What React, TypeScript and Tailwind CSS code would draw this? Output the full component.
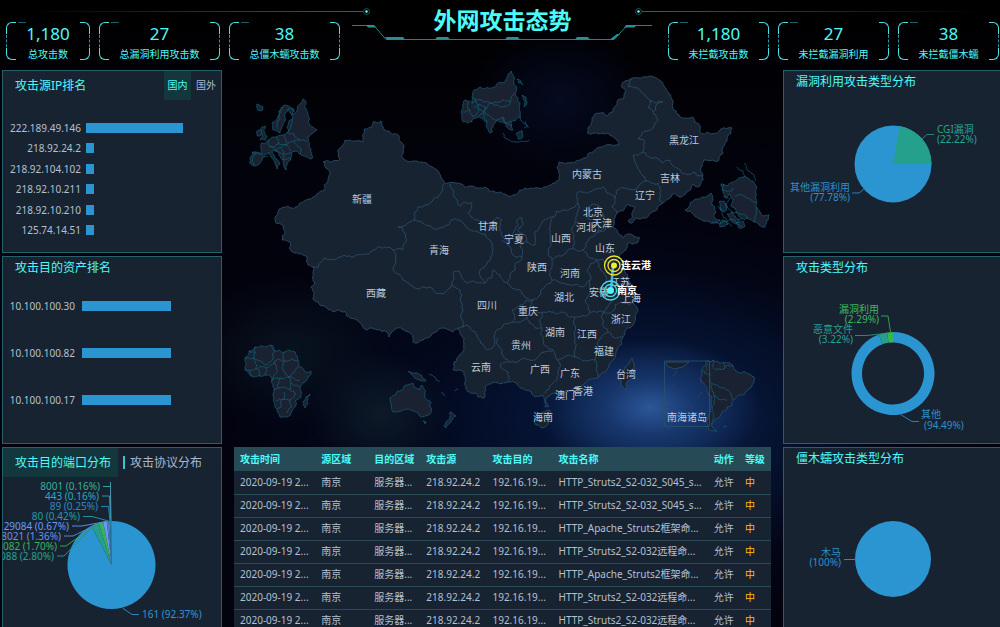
import type { ReactNode } from "react"

type Point = [number, number]

const totalStats = [
  { value: "1,180", label: "总攻击数", width: "min-w-[84px]" },
  { value: "27", label: "总漏洞利用攻击数", width: "min-w-[121px]" },
  { value: "38", label: "总僵木蠕攻击数", width: "min-w-[111px]" },
]

const missedStats = [
  { value: "1,180", label: "未拦截攻击数", width: "min-w-[101px]" },
  { value: "27", label: "未拦截漏洞利用", width: "min-w-[111px]" },
  { value: "38", label: "未拦截僵木蠕", width: "min-w-[101px]" },
]

const sourceIps = [
  { name: "222.189.49.146", percent: 72 },
  { name: "218.92.24.2", percent: 6 },
  { name: "218.92.104.102", percent: 6 },
  { name: "218.92.10.211", percent: 6 },
  { name: "218.92.10.210", percent: 6 },
  { name: "125.74.14.51", percent: 6 },
]

const targetAssets = [
  { name: "10.100.100.30", percent: 64 },
  { name: "10.100.100.82", percent: 64 },
  { name: "10.100.100.17", percent: 64 },
]

const attackNames = [
  "HTTP_Struts2_S2-032_S045_s...",
  "HTTP_Struts2_S2-032_S045_s...",
  "HTTP_Apache_Struts2框架命...",
  "HTTP_Struts2_S2-032远程命...",
  "HTTP_Apache_Struts2框架命...",
  "HTTP_Struts2_S2-032远程命...",
  "HTTP_Struts2_S2-032远程命...",
]

const columns = [
  { title: "攻击时间", width: "w-[81px]" },
  { title: "源区域", width: "w-[53px]" },
  { title: "目的区域", width: "w-[52px]" },
  { title: "攻击源", width: "w-[66px]" },
  { title: "攻击目的", width: "w-[66px]" },
  { title: "攻击名称", width: "w-[155px]" },
  { title: "动作", width: "w-[31px]" },
  { title: "等级", width: "w-[32px]" },
]

const provinces: [string, number, number][] = [
  ["新疆", 362, 199],
  ["西藏", 376, 293],
  ["青海", 439, 250],
  ["甘肃", 488, 226],
  ["宁夏", 514, 239],
  ["内蒙古", 587, 174],
  ["黑龙江", 684, 140],
  ["吉林", 670, 178],
  ["辽宁", 645, 195],
  ["北京", 593, 212],
  ["天津", 602, 223],
  ["河北", 586, 227],
  ["山西", 561, 238],
  ["山东", 605, 248],
  ["陕西", 537, 267],
  ["河南", 570, 273],
  ["江苏", 620, 282],
  ["安徽", 599, 292],
  ["上海", 631, 298],
  ["湖北", 564, 297],
  ["四川", 487, 305],
  ["重庆", 528, 311],
  ["浙江", 621, 319],
  ["湖南", 555, 332],
  ["江西", 587, 334],
  ["贵州", 521, 345],
  ["福建", 604, 351],
  ["云南", 481, 367],
  ["广西", 540, 369],
  ["广东", 570, 373],
  ["台湾", 626, 374],
  ["香港", 583, 391],
  ["澳门", 565, 395],
  ["海南", 543, 417],
  ["南海诸岛", 687, 417],
]

const mainland: Point[] = [
  [373, 122], [381, 121], [383, 127], [388, 131], [398, 135], [401, 142], [404, 147], [402, 157], [404, 159],
  [422, 162], [432, 167], [437, 170], [441, 177], [445, 184], [473, 186], [485, 187], [495, 192], [505, 194],
  [525, 188], [547, 187], [555, 183], [560, 175], [557, 168], [559, 162], [567, 163], [575, 163], [585, 158],
  [593, 152], [600, 147], [612, 145], [619, 145], [617, 140], [608, 133], [598, 134], [587, 133], [588, 128],
  [592, 120], [595, 114], [607, 116], [613, 112], [617, 102], [626, 92], [621, 86], [625, 81], [633, 78],
  [647, 77], [662, 82], [668, 92], [673, 102], [677, 114], [692, 117], [699, 124], [702, 134], [712, 134],
  [720, 130], [732, 128], [727, 138], [723, 153], [718, 161], [704, 160], [703, 175], [703, 180], [698, 187],
  [693, 184], [687, 192], [680, 197], [672, 194], [663, 203], [652, 212], [642, 218], [630, 223], [628, 221],
  [633, 212], [635, 207], [628, 204], [624, 210], [617, 213], [614, 219], [613, 227], [618, 233], [623, 238],
  [630, 234], [639, 237], [638, 242], [628, 243], [623, 252], [617, 260], [623, 268], [628, 277], [631, 287],
  [633, 293], [640, 297], [633, 303], [637, 308], [635, 317], [633, 325], [623, 337], [617, 350], [610, 363],
  [600, 375], [597, 378], [585, 383], [578, 387], [565, 392], [555, 393], [547, 397], [545, 402], [549, 407],
  [545, 407], [543, 395], [533, 395], [522, 388], [517, 383], [508, 382], [500, 384], [485, 387], [484, 398],
  [478, 397], [475, 393], [466, 388], [465, 378], [460, 370], [453, 370], [454, 362], [462, 353], [461, 335],
  [458, 328], [453, 332], [442, 328], [423, 340], [413, 342], [410, 333], [397, 328], [392, 332], [389, 337],
  [387, 332], [367, 330], [350, 318], [337, 310], [332, 311], [318, 302], [313, 298], [311, 287], [315, 283],
  [313, 273], [313, 267], [308, 265], [307, 257], [293, 252], [290, 242], [282, 240], [285, 233], [283, 225],
  [276, 223], [275, 217], [278, 212], [288, 206], [297, 207], [300, 203], [313, 197], [324, 191], [328, 180],
  [325, 163], [323, 162], [340, 159], [345, 140], [363, 142], [364, 129], [372, 127],
]

const islands: Point[][] = [
  [[632, 358], [634, 363], [631, 376], [626, 390], [621, 382], [625, 367]],
  [[535, 417], [543, 412], [550, 410], [552, 417], [548, 424], [542, 428], [536, 425]],
]

const borders: Point[][] = [
  // xinjiang, tibet, qinghai
  [[443, 184], [441, 193], [425, 205], [418, 207], [415, 220], [398, 227], [405, 233], [403, 250], [393, 250]],
  [[393, 250], [382, 248], [373, 250], [363, 254], [353, 257], [340, 257], [324, 258], [318, 267], [313, 267]],
  [[393, 250], [393, 270], [403, 280], [430, 287], [443, 294], [452, 285], [453, 272], [458, 271], [467, 283], [478, 283]],
  [[478, 283], [485, 283], [480, 270], [487, 263], [493, 250], [490, 240], [478, 232], [463, 223], [452, 220], [443, 228], [430, 226], [415, 220]],
  [[452, 285], [460, 290], [463, 310], [463, 327], [458, 328]],
  // gansu, ningxia, inner mongolia
  [[450, 184], [457, 200], [460, 206], [472, 203], [468, 213], [478, 220], [488, 223], [497, 217], [502, 220], [500, 230], [507, 240]],
  [[517, 220], [522, 218], [523, 223], [518, 230], [525, 235], [527, 242], [520, 247], [522, 257], [513, 255], [510, 247], [502, 240]],
  [[517, 220], [515, 230], [507, 240]],
  [[527, 242], [535, 245], [535, 232], [542, 223], [553, 217], [563, 210], [572, 208], [578, 203], [577, 193], [583, 192], [593, 190], [603, 187], [607, 193], [615, 198]],
  [[615, 198], [617, 190], [627, 188], [647, 181], [645, 177], [635, 163], [633, 155], [643, 152]],
  [[643, 152], [645, 142], [638, 139], [653, 128], [658, 120], [653, 112], [663, 102], [647, 98], [640, 90], [628, 87], [633, 78]],
  [[653, 112], [648, 108], [651, 100]],
  [[643, 152], [653, 158], [670, 160], [677, 168], [682, 173], [687, 175], [693, 172], [703, 177]],
  [[647, 181], [658, 183], [660, 193], [663, 203]],
  [[615, 198], [612, 207], [617, 213]],
  // hebei, beijing, tianjin, shanxi
  [[578, 203], [577, 213], [575, 223], [573, 233], [573, 248], [583, 250], [587, 242], [597, 232], [613, 227]],
  [[586, 210], [592, 204], [600, 207], [603, 214], [597, 220], [588, 219], [586, 210]],
  [[603, 214], [606, 222], [604, 231], [597, 232], [597, 220]],
  [[553, 217], [550, 233], [549, 248], [552, 260], [562, 256], [573, 248]],
  // henan, shandong, jiangsu, anhui
  [[583, 250], [590, 258], [597, 260], [587, 270], [590, 280], [582, 287], [563, 283], [552, 280], [550, 270], [552, 260]],
  [[597, 260], [608, 262], [617, 260]],
  [[597, 260], [600, 268], [605, 275], [605, 283], [615, 293], [610, 303], [603, 312], [590, 312], [585, 300], [590, 280]],
  [[610, 313], [615, 305], [623, 303], [633, 303]],
  [[623, 303], [627, 297], [633, 293]],
  // shaanxi, hubei, chongqing
  [[522, 257], [515, 270], [507, 283], [520, 290], [533, 300], [541, 290], [552, 280]],
  [[485, 283], [493, 270], [500, 275], [507, 283]],
  [[533, 300], [530, 308], [542, 312], [553, 312], [565, 313], [573, 317], [578, 317], [590, 312]],
  [[533, 300], [520, 305], [512, 310], [513, 322], [527, 317], [535, 328], [542, 328], [542, 312]],
  // hunan, jiangxi, fujian, zhejiang
  [[542, 328], [543, 340], [553, 350], [558, 360], [566, 356], [575, 357], [574, 333], [575, 317]],
  [[575, 357], [583, 361], [595, 360], [597, 343], [608, 332], [603, 322], [603, 312]],
  [[608, 332], [613, 337], [623, 337]],
  [[595, 360], [598, 377]],
  [[603, 312], [610, 313]],
  // sichuan, guizhou, yunnan, guangxi, guangdong
  [[463, 327], [467, 325], [477, 335], [487, 350], [493, 347], [497, 330], [503, 325], [513, 322]],
  [[497, 338], [502, 350], [510, 362], [520, 360], [537, 358], [553, 350]],
  [[510, 362], [500, 365], [508, 372], [508, 382]],
  [[558, 360], [558, 373], [552, 384], [545, 393]],
]

const continents: Point[][] = [
  // europe
  [
    [303, 99], [306, 102], [307, 111], [309, 120], [313, 127], [317, 130], [312, 134], [307, 137], [309, 146],
    [311, 152], [313, 157], [310, 159], [305, 156], [300, 154], [296, 151], [292, 152], [291, 160], [287, 164],
    [286, 170], [284, 167], [283, 160], [279, 155], [275, 151], [272, 151], [276, 159], [280, 164], [277, 169],
    [275, 162], [271, 157], [269, 152], [265, 154], [262, 158], [258, 165], [254, 166], [250, 163], [252, 152],
    [256, 152], [262, 153], [261, 143], [265, 144], [269, 140], [273, 137], [276, 137], [283, 135], [288, 132],
    [287, 127], [289, 121], [293, 118], [290, 113], [288, 109], [285, 118], [283, 125], [280, 133], [277, 131],
    [273, 130], [272, 123], [277, 119], [279, 111], [284, 105], [289, 106], [294, 109], [293, 115], [297, 111],
    [299, 105],
  ],
  [[262, 127], [265, 126], [264, 131], [267, 137], [265, 140], [260, 140], [263, 136]],
  [[257, 131], [261, 130], [261, 135], [257, 136]],
  [[257, 104], [260, 106], [263, 107], [262, 111], [258, 110]],
  // asia
  [
    [511, 71], [515, 78], [514, 82], [517, 87], [515, 93], [517, 97], [520, 103], [519, 110], [520, 117],
    [515, 121], [511, 122], [513, 130], [509, 129], [505, 123], [500, 122], [497, 120], [494, 124], [491, 133],
    [488, 129], [487, 122], [482, 118], [477, 117], [473, 119], [472, 122], [463, 122], [463, 107], [465, 100],
    [469, 101], [473, 103], [472, 97], [474, 90], [480, 87], [484, 89], [492, 88], [498, 83], [502, 83], [507, 78],
  ],
  [[517, 79], [521, 82], [523, 85], [519, 83]],
  [[522, 95], [526, 97], [527, 102], [524, 107], [525, 101]],
  [[516, 134], [519, 132], [522, 130], [523, 136], [518, 139]],
  // africa
  [
    [255, 347], [262, 346], [272, 345], [273, 350], [279, 350], [285, 352], [295, 352], [298, 360], [300, 367],
    [305, 372], [311, 371], [307, 379], [300, 387], [301, 397], [295, 401], [295, 407], [291, 413], [287, 417],
    [280, 417], [277, 409], [275, 403], [274, 390], [271, 382], [272, 378], [265, 375], [258, 376], [253, 377],
    [245, 370], [245, 358], [249, 351],
  ],
  [[310, 394], [308, 404], [305, 408], [303, 402]],
  // oceania
  [
    [390, 398], [396, 394], [402, 390], [406, 385], [410, 384], [413, 383], [415, 387], [420, 390], [422, 385],
    [425, 394], [431, 402], [431, 408], [429, 415], [423, 417], [418, 413], [413, 411], [403, 410], [397, 412],
    [393, 412], [391, 404],
  ],
  [[408, 371], [413, 373], [419, 374], [426, 381], [420, 380], [414, 377]],
  [[423, 421], [426, 422], [425, 424]],
  [[450, 412], [453, 414], [456, 416], [451, 422], [446, 428], [444, 426], [450, 419]],
  // north america
  [
    [685, 210], [689, 207], [691, 202], [696, 199], [702, 197], [707, 196], [711, 193], [713, 199], [712, 205],
    [716, 212], [714, 217], [720, 220], [716, 223], [707, 221], [700, 219], [694, 215], [690, 211],
  ],
  [
    [721, 184], [727, 186], [732, 182], [737, 180], [742, 177], [748, 178], [753, 181], [757, 187], [756, 196],
    [756, 207], [760, 212], [764, 216], [769, 215], [768, 220], [765, 227], [759, 225], [754, 222], [748, 218],
    [741, 219], [737, 213], [735, 208], [731, 205], [733, 199], [730, 194], [726, 198], [723, 192],
  ],
  [[719, 202], [724, 201], [727, 206], [724, 212], [720, 210]],
  [[727, 214], [732, 212], [735, 216], [740, 220], [736, 224], [731, 221]],
  [[722, 220], [728, 224], [720, 227]],
  [[737, 222], [743, 221], [745, 226], [739, 228]],
  // south america
  [
    [702, 370], [705, 366], [706, 361], [713, 360], [720, 363], [730, 363], [734, 369], [741, 373], [749, 374],
    [755, 378], [753, 384], [748, 390], [744, 395], [735, 399], [732, 405], [727, 407], [722, 412], [719, 418],
    [714, 421], [712, 427], [717, 431], [710, 430], [708, 426], [710, 410], [712, 397], [707, 391], [703, 382],
    [700, 378],
  ],
]

const continentBorders: Point[][] = [
  [[293, 118], [291, 125], [288, 132]],
  [[288, 132], [294, 134], [299, 140], [307, 141]],
  [[288, 109], [292, 108], [295, 112]],
  [[283, 107], [280, 119], [278, 129]],
  [[276, 137], [278, 144], [286, 145], [294, 141], [299, 140]],
  [[284, 135], [286, 145], [290, 151]],
  [[269, 140], [270, 147], [275, 151], [281, 148], [286, 145]],
  [[270, 147], [278, 144]],
  [[276, 151], [282, 154], [291, 152]],
  [[282, 149], [283, 160], [291, 158]],
  [[294, 141], [300, 148], [300, 154]],
  [[252, 152], [263, 154]],
  [[256, 152], [254, 165]],
  [[264, 157], [268, 156]],
  [[473, 103], [481, 100], [490, 103], [500, 107], [511, 102], [515, 93]],
  [[490, 103], [495, 102], [503, 100], [511, 102]],
  [[490, 103], [484, 110], [490, 116], [497, 120]],
  [[473, 97], [478, 108], [473, 117]],
  [[478, 108], [484, 112], [487, 122]],
  [[474, 107], [480, 104], [486, 107], [484, 112], [479, 116]],
  [[463, 112], [470, 110], [473, 117]],
  [[468, 102], [470, 110]],
  [[497, 120], [503, 117], [505, 123], [511, 121]],
  [[503, 117], [508, 124], [512, 126]],
  [[503, 133], [507, 139], [512, 142], [520, 141], [529, 140]],
  [[520, 116], [524, 123], [528, 128]],
  [[525, 121], [527, 126], [524, 128]],
  [[255, 347], [254, 358], [266, 365], [273, 359], [272, 345]],
  [[245, 358], [254, 358], [256, 369], [245, 370]],
  [[249, 351], [256, 352]],
  [[250, 370], [252, 376]],
  [[256, 369], [266, 368], [275, 361], [285, 361], [285, 352]],
  [[259, 369], [260, 376]],
  [[285, 361], [298, 361]],
  [[275, 361], [277, 372], [272, 380], [280, 378], [289, 377], [300, 380]],
  [[285, 361], [283, 370], [289, 377], [298, 366]],
  [[266, 368], [265, 375]],
  [[280, 378], [278, 388], [290, 390], [291, 383], [289, 377]],
  [[291, 383], [300, 387]],
  [[278, 388], [274, 390]],
  [[284, 392], [284, 399], [276, 401]],
  [[290, 390], [296, 394], [290, 400], [284, 399], [280, 408], [277, 409]],
  [[290, 400], [292, 407], [287, 413]],
  [[429, 374], [435, 377], [440, 382]],
  [[441, 393], [445, 396]],
  [[455, 391], [458, 389]],
  [[737, 167], [743, 171], [744, 177]],
  [[745, 163], [747, 169], [753, 174], [755, 181]],
  [[735, 196], [745, 197], [756, 203]],
  [[726, 203], [733, 213], [740, 214], [748, 219]],
  [[712, 222], [722, 223], [735, 220], [742, 226]],
  [[723, 196], [730, 199], [727, 208]],
  [[718, 206], [722, 214], [732, 226]],
  [[724, 184], [722, 190], [727, 192], [733, 188]],
  [[757, 207], [755, 217], [754, 222]],
  [[713, 360], [716, 370], [724, 369], [733, 365]],
  [[724, 363], [724, 369]],
  [[702, 370], [710, 374], [712, 384], [718, 386], [727, 390], [733, 400]],
  [[712, 384], [714, 396], [727, 400]],
  [[714, 396], [712, 410], [711, 424]],
  [[723, 427], [727, 427]],
]

const oceanMarks: Point[][] = [
  [[673, 376], [677, 372], [675, 370]],
  [[673, 383], [674, 388]],
  [[673, 398], [677, 394]],
  [[669, 406], [671, 409]],
  [[691, 411], [695, 404]],
  [[699, 397], [702, 392]],
  [[701, 384], [702, 379]],
  [[704, 374], [708, 364]],
]

// Splits every segment at shifted midpoints; the shift depends only on the
// end points, so a border shared by two shapes bends the same way.
function bend(a: Point, b: Point, depth: number): Point[] {
  const dx = b[0] - a[0]
  const dy = b[1] - a[1]
  if (depth === 0 || Math.hypot(dx, dy) < 2) return [b]
  const seed = Math.sin((a[0] + b[0]) * 12.9898 + (a[1] + b[1]) * 78.233) * 43758.5453
  const shift = (seed - Math.floor(seed) - 0.5) * 0.42
  const mid: Point = [(a[0] + b[0]) / 2 - dy * shift, (a[1] + b[1]) / 2 + dx * shift]
  return [...bend(a, mid, depth - 1), ...bend(mid, b, depth - 1)]
}

function outline(points: Point[], closed = true) {
  const ring = closed ? [...points, points[0]] : points
  const all: Point[] = [ring[0]]
  for (let i = 1; i < ring.length; i++) all.push(...bend(ring[i - 1], ring[i], 3))
  return "M" + all.map(([x, y]) => `${x.toFixed(1)} ${y.toFixed(1)}`).join("L") + (closed ? "Z" : "")
}

// Pie slice between two clockwise percentages, counted from twelve o'clock
function slice(cx: number, cy: number, r: number, from: number, to: number, inner = 0) {
  const at = (p: number, radius: number) => {
    const a = (p / 100) * Math.PI * 2
    return `${(cx + radius * Math.sin(a)).toFixed(2)} ${(cy - radius * Math.cos(a)).toFixed(2)}`
  }
  const large = to - from > 50 ? 1 : 0
  const back = inner ? `L${at(to, inner)}A${inner} ${inner} 0 ${large} 0 ${at(from, inner)}` : `L${cx} ${cy}`
  return `M${at(from, r)}A${r} ${r} 0 ${large} 1 ${at(to, r)}${back}Z`
}

function StatCard({ value, label, width }: { value: string; label: string; width: string }) {
  return (
    <div className={`relative flex h-[38px] flex-col items-center px-2 pt-[2px] text-[#4dfafa] ${width}`}>
      <span className="absolute inset-x-0 inset-y-2 border-x border-dashed border-[#2b9aa0]" />
      <span className="absolute top-0 left-0 h-3 w-[10px] rounded-tl-md border-t border-l border-[#4de0e4]" />
      <span className="absolute top-0 right-0 h-3 w-[10px] rounded-tr-md border-t border-r border-[#4de0e4]" />
      <span className="absolute bottom-0 left-0 h-3 w-[10px] rounded-bl-md border-b border-l border-[#4de0e4]" />
      <span className="absolute right-0 bottom-0 h-3 w-[10px] rounded-br-md border-r border-b border-[#4de0e4]" />
      <span className="absolute top-0 left-3 w-2 border-t border-[#1c5f66]" />
      <span className="text-[17px] leading-5">{value}</span>
      <span className="mt-1 text-[10px] leading-3 whitespace-nowrap">{label}</span>
    </div>
  )
}

function Panel({ children, className = "" }: { children: ReactNode; className?: string }) {
  return <section className={`overflow-hidden border border-[#28606a] bg-[#182332] ${className}`}>{children}</section>
}

function PanelTitle({ children }: { children: ReactNode }) {
  return <h2 className="h-[22px] pl-3 text-xs leading-[22px] text-[#4dfafa]">{children}</h2>
}

function BarList({ rows, labelClass, className }: {
  rows: { name: string; percent: number }[]
  labelClass: string
  className: string
}) {
  return (
    <ul className={`flex flex-col justify-between ${className}`}>
      {rows.map((row) => (
        <li key={row.name} className="flex h-[10px] items-center">
          <span className={`shrink-0 text-right text-[10px] leading-[10px] text-[#b4c0d0] ${labelClass}`}>{row.name}</span>
          <span className="h-full flex-1">
            <span className="block h-full bg-[#2b95d1]" style={{ width: `${row.percent}%` }} />
          </span>
        </li>
      ))}
    </ul>
  )
}

function AttackMap() {
  return (
    <svg viewBox="222 70 561 377" className="block w-full shrink-0" role="img" aria-label="攻击地图">
      <g fill="#1a2232" stroke="#156078" strokeWidth="0.7">
        {continents.map((points, i) => (
          <path key={i} d={outline(points)} />
        ))}
        {continentBorders.map((points, i) => (
          <path key={i} d={outline(points, false)} fill="none" />
        ))}
      </g>
      <g fill="#182332" stroke="#2a4c66" strokeWidth="0.9" strokeLinejoin="round">
        <path d={outline(mainland)} />
        {islands.map((points, i) => (
          <path key={i} d={outline(points)} />
        ))}
        {borders.map((points, i) => (
          <path key={i} d={outline(points, false)} fill="none" />
        ))}
        <path d="M666 362H689L683 367L674 369L667 366Z" />
        <rect x="664.5" y="361" width="45" height="65.5" fill="none" stroke="#25506a" />
        {oceanMarks.map((points, i) => (
          <path key={i} d={outline(points, false)} fill="none" stroke="#2d4258" />
        ))}
      </g>
      <g className="text-[10px]" fill="#bccadb" textAnchor="middle">
        {provinces.map(([name, x, y]) => (
          <text key={name} x={x} y={y + 4}>{name}</text>
        ))}
      </g>
      <path d="M613 266L611 290" stroke="#56a9dc" strokeWidth="2.5" />
      <g fill="none" stroke="#e8e22a" strokeWidth="1.3">
        <circle cx="614" cy="265.5" r="9.5" />
        <circle cx="614" cy="265.5" r="6" />
        <circle cx="614" cy="265.5" r="3" fill="#f2ee1e" stroke="none" />
      </g>
      <g fill="none" stroke="#3fd9e8" strokeWidth="1.3">
        <circle cx="610.5" cy="290.5" r="9.5" />
        <circle cx="610.5" cy="290.5" r="6" />
        <circle cx="610.5" cy="290.5" r="3.5" fill="#4ff4f4" stroke="none" />
      </g>
      <g className="text-[10px] font-bold" fill="#fff">
        <text x="621" y="269">连云港</text>
        <text x="617" y="294">南京</text>
      </g>
    </svg>
  )
}

function PortChart() {
  const parts: [number, string][] = [
    [92.45, "#2b95d1"],
    [2.8, "#259f8c"],
    [1.7, "#35b35a"],
    [1.36, "#6f97f0"],
    [0.67, "#4f7fe0"],
    [0.42, "#2795b0"],
    [0.25, "#2b7fc0"],
    [0.16, "#2fb0bd"],
    [0.19, "#32b59c"],
  ]
  let sum = 0
  return (
    <svg viewBox="3 477 218 150" className="h-[150px] w-full" role="img" aria-label="攻击目的端口分布">
      {parts.map(([share, color], i) => {
        const d = slice(111.5, 565, 44, sum, sum + share)
        sum += share
        return <path key={i} d={d} fill={color} />
      })}
      <g fill="none" strokeWidth="1">
        <path d="M111 521L110.500 486.500H103" stroke="#2fa596" />
        <path d="M110.500 482V521" stroke="#4a90a8" />
        <path d="M110.500 521L109.500 496H102" stroke="#2798a8" />
        <path d="M110 521L108.500 506.500H101" stroke="#2d7fb8" />
        <path d="M108.500 521L92 516.500H83" stroke="#238fa5" />
        <path d="M106 521.500L82 526H72" stroke="#5a8ae0" />
        <path d="M101 522.500L73 536H64" stroke="#5a80d8" />
        <path d="M97 524L66 546H60" stroke="#35a358" />
        <path d="M92 527L64 556H57" stroke="#259080" />
        <path d="M122.500 608L132 614.500H139" stroke="#2b85bd" />
      </g>
      <g className="text-[10px]" textAnchor="end">
        <text x="100" y="490" fill="#36b09c">8001 (0.16%)</text>
        <text x="99" y="500" fill="#2ba9b8">443 (0.16%)</text>
        <text x="98" y="510" fill="#2f86c4">89 (0.25%)</text>
        <text x="80" y="520" fill="#2599ae">80 (0.42%)</text>
        <text x="69" y="530" fill="#6a9bf2">29084 (0.67%)</text>
        <text x="61" y="540" fill="#6f8fe6">8021 (1.36%)</text>
        <text x="57" y="550" fill="#3bb35c">8082 (1.70%)</text>
        <text x="54" y="560" fill="#2aa08c">8088 (2.80%)</text>
        <text x="142" y="618" fill="#2f95d0" textAnchor="start">161 (92.37%)</text>
      </g>
    </svg>
  )
}

function ExploitChart() {
  return (
    <svg viewBox="784 93 216 159" className="h-[159px] w-full" role="img" aria-label="漏洞利用攻击类型分布">
      <circle cx="893" cy="164" r="38.500" fill="#2b95d1" />
      <path d={slice(893, 164, 38.5, 2.78, 25)} fill="#25a08d" />
      <path d="M922 139L927 134.500H934" fill="none" stroke="#25806f" />
      <path d="M864 189L859 193H852" fill="none" stroke="#2b7fb0" />
      <g className="text-[10px]">
        <text x="937" y="133" fill="#27a28e">CGI漏洞</text>
        <text x="937" y="143" fill="#27a28e">(22.22%)</text>
        <text x="850" y="191" fill="#2b8fc8" textAnchor="end">其他漏洞利用</text>
        <text x="850" y="201" fill="#2b8fc8" textAnchor="end">(77.78%)</text>
      </g>
    </svg>
  )
}

function TypeChart() {
  return (
    <svg viewBox="784 279 216 164" className="h-[164px] w-full" role="img" aria-label="攻击类型分布">
      <path d={slice(893, 373.5, 41.5, 0, 94.49, 31)} fill="#2b95d1" />
      <path d={slice(893, 373.5, 41.5, 94.49, 97.71, 31)} fill="#25a08d" />
      <path d={slice(893, 373.5, 41.5, 97.71, 100, 31)} fill="#38b455" />
      <path d="M890.500 332L888 316H881" fill="none" stroke="#359a50" />
      <path d="M884 333.500L867 335.500H855" fill="none" stroke="#258a7a" />
      <path d="M900.500 414.500L912 421.500H919" fill="none" stroke="#2b7fb0" />
      <g className="text-[10px]">
        <text x="879" y="313" fill="#3cb85c" textAnchor="end">漏洞利用</text>
        <text x="879" y="323" fill="#3cb85c" textAnchor="end">(2.29%)</text>
        <text x="853" y="333" fill="#27a08e" textAnchor="end">恶意文件</text>
        <text x="853" y="343" fill="#27a08e" textAnchor="end">(3.22%)</text>
        <text x="921" y="418" fill="#2b8fc8">其他</text>
        <text x="924" y="429" fill="#2b8fc8">(94.49%)</text>
      </g>
    </svg>
  )
}

function TrojanChart() {
  return (
    <svg viewBox="784 470 216 157" className="h-[157px] w-full" role="img" aria-label="僵木蠕攻击类型分布">
      <circle cx="893" cy="559" r="38" fill="#2b95d1" />
      <path d="M844 559.500H856" stroke="#2b85bd" />
      <g className="text-[10px]" fill="#2b8fc8" textAnchor="end">
        <text x="841" y="556">木马</text>
        <text x="841" y="566">(100%)</text>
      </g>
    </svg>
  )
}

function AttackTable() {
  return (
    <table className="w-full table-fixed border-collapse text-left text-[10px] whitespace-nowrap">
      <thead>
        <tr className="h-6 bg-[#264a56] text-[#4dfafa]">
          {columns.map((column) => (
            <th key={column.title} className={`p-0 pl-[6px] font-bold ${column.width}`}>{column.title}</th>
          ))}
        </tr>
      </thead>
      <tbody>
        {attackNames.map((name, i) => (
          <tr key={i} className="h-[23px] border-b border-[#2a4a58] bg-[#182332] text-[#b4c0d0]">
            <td className="p-0 pl-[6px]">2020-09-19 2...</td>
            <td className="p-0 pl-[6px]">南京</td>
            <td className="p-0 pl-[6px]">服务器...</td>
            <td className="p-0 pl-[6px]">218.92.24.2</td>
            <td className="p-0 pl-[6px]">192.16.19...</td>
            <td className="p-0 pl-[6px]">{name}</td>
            <td className="p-0 pl-[6px]">允许</td>
            <td className="p-0 pl-[6px] text-[#ffc000]">中</td>
          </tr>
        ))}
      </tbody>
    </table>
  )
}

function HeaderLines() {
  return (
    <svg viewBox="0 0 1000 46" className="absolute inset-x-0 top-0 w-full" aria-hidden="true">
      <defs>
        <linearGradient id="fadeLeft" gradientUnits="userSpaceOnUse" x1="30" x2="363" y1="0" y2="0">
          <stop offset="0" stopColor="#2a6468" stopOpacity="0" />
          <stop offset="1" stopColor="#2a6468" />
        </linearGradient>
        <linearGradient id="fadeRight" gradientUnits="userSpaceOnUse" x1="642" x2="980" y1="0" y2="0">
          <stop offset="0" stopColor="#2a6468" />
          <stop offset="1" stopColor="#2a6468" stopOpacity="0" />
        </linearGradient>
      </defs>
      <rect x="30" y="11" width="333" height="1" fill="url(#fadeLeft)" />
      <rect x="642" y="11" width="338" height="1" fill="url(#fadeRight)" />
      <g fill="none" stroke="#1f5358">
        <circle cx="366.500" cy="11.500" r="3" />
        <circle cx="638.500" cy="11.500" r="3" />
      </g>
      <circle cx="366.500" cy="11.500" r="1.200" fill="#8ff" />
      <circle cx="638.500" cy="11.500" r="1.200" fill="#8ff" />
      <path d="M352 25.500H374L386 39.500H614L627 25.500H652" fill="none" stroke="#268086" />
      <path
        d="M366 25H374L376 27.500H368ZM385 37H403L405 39.500H387ZM437 37H448L450 39.500H435ZM507 37H518L520 39.500H505ZM577 37H588L590 39.500H575ZM613 37L617 34H620L614 39.500H610ZM626 25H637L634 27.500H624Z"
        fill="#2a8f94"
      />
    </svg>
  )
}

export default function App() {
  return (
    <div className="flex h-screen flex-col overflow-hidden bg-[#02030f] bg-[radial-gradient(ellipse_11%_11%_at_65%_65%,#2c5698_0%,#1e427faa_40%,transparent_100%),radial-gradient(ellipse_24%_24%_at_66%_67%,#0b2550_0%,#07193c99_50%,transparent_100%),radial-gradient(ellipse_7%_10%_at_38%_66%,#0d1a28_0%,transparent_100%),radial-gradient(ellipse_10%_12%_at_29%_56%,#08131f_0%,transparent_100%),radial-gradient(ellipse_40%_34%_at_60%_66%,#030d2a_0%,transparent_100%),radial-gradient(ellipse_9%_12%_at_56%_16%,#040a20_0%,transparent_100%),linear-gradient(#000,#02020c_30%,#02030f)] font-['Noto_Sans','Noto_Sans_CJK_SC',sans-serif]">
      <header className="relative h-[70px] shrink-0">
        <HeaderLines />
        <div className="relative grid grid-cols-[1fr_auto_1fr] items-start pr-px pl-[6px]">
          <div className="mt-[22px] flex gap-[9px]">
            {totalStats.map((stat) => (
              <StatCard key={stat.label} {...stat} />
            ))}
          </div>
          <h1 className="mt-1 text-[23px] leading-8 font-bold text-[#4dfafa]">外网攻击态势</h1>
          <div className="mt-[22px] flex justify-end gap-[9px]">
            {missedStats.map((stat) => (
              <StatCard key={stat.label} {...stat} />
            ))}
          </div>
        </div>
      </header>

      <main className="grid min-h-0 flex-1 grid-cols-[220fr_561fr_217fr] pl-[2px]">
        <div className="flex min-h-0 min-w-0 flex-col gap-[3px]">
          <Panel className="shrink-0 pb-[17px]">
            <div className="flex h-[29px] items-stretch">
              <h2 className="flex-1 pl-3 text-xs leading-[29px] text-[#4dfafa]">攻击源IP排名</h2>
              <button type="button" className="w-[27px] bg-[#14373d] text-[10px] text-[#4dfafa]">国内</button>
              <button type="button" className="w-[30px] text-[10px] text-[#a8b8cc]">国外</button>
            </div>
            <BarList rows={sourceIps} labelClass="w-[83px] pr-[5px]" className="mt-[23px] h-[112px]" />
          </Panel>
          <Panel className="shrink-0 pb-[38px]">
            <PanelTitle>攻击目的资产排名</PanelTitle>
            <BarList rows={targetAssets} labelClass="w-[79px] pr-[7px]" className="mt-[22px] h-[104px]" />
          </Panel>
          <Panel className="flex-1 border-b-0">
            <div className="flex h-[29px] items-center text-xs">
              <button type="button" className="h-full bg-[#14373d] pr-[7px] pl-3 text-[#4dfafa]">攻击目的端口分布</button>
              <span className="ml-[5px] h-[13px] w-[2px] bg-[#3cc4c8]" />
              <button type="button" className="h-full pl-[5px] text-[#a8b8cc]">攻击协议分布</button>
            </div>
            <PortChart />
          </Panel>
        </div>

        <div className="flex min-h-0 min-w-0 flex-col overflow-hidden">
          <AttackMap />
          <div className="mx-3">
            <AttackTable />
          </div>
        </div>

        <div className="flex min-h-0 min-w-0 flex-col gap-[3px]">
          <Panel className="shrink-0 border-r-0">
            <PanelTitle>漏洞利用攻击类型分布</PanelTitle>
            <ExploitChart />
          </Panel>
          <Panel className="shrink-0 border-r-0">
            <PanelTitle>攻击类型分布</PanelTitle>
            <TypeChart />
          </Panel>
          <Panel className="flex-1 border-r-0 border-b-0">
            <PanelTitle>僵木蠕攻击类型分布</PanelTitle>
            <TrojanChart />
          </Panel>
        </div>
      </main>
    </div>
  )
}
